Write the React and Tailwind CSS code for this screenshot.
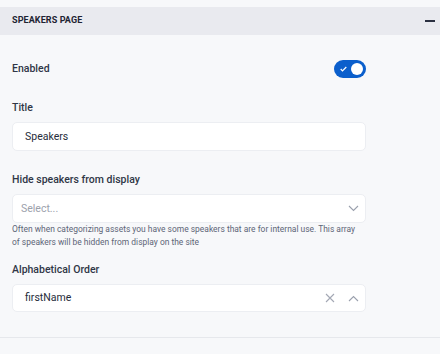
import React from "react";

const Label = ({ children, className = "" }) => (
  <div className={`text-[10.5px] leading-[14px] font-medium text-[#2f3646] ${className}`}>
    {children}
  </div>
);

const ChevronDown = () => (
  <svg width="11" height="7" viewBox="0 0 11 7" fill="none">
    <path d="M1 1l4.5 4.5L10 1" stroke="#9aa0ad" strokeWidth="1.1" />
  </svg>
);

const ChevronUp = () => (
  <svg width="11" height="7" viewBox="0 0 11 7" fill="none">
    <path d="M1 6l4.5-4.5L10 6" stroke="#9aa0ad" strokeWidth="1.1" />
  </svg>
);

const Cross = () => (
  <svg width="10" height="10" viewBox="0 0 10 10" fill="none">
    <path d="M1 1l8 8M9 1l-8 8" stroke="#a3a8b4" strokeWidth="1.1" />
  </svg>
);

export default function App() {
  return (
    <div
      className="h-[354px] w-[440px] bg-[#f7f8fa] pt-[7px]"
      style={{ fontFamily: "Roboto, 'Liberation Sans', sans-serif" }}
    >
      {/* Header */}
      <div className="h-[28px] bg-[#e9eaef] pl-3 pr-[5px] flex items-center justify-between">
        <span className="text-[9px] font-bold uppercase tracking-[0.1px] text-[#1e2433]">
          Speakers page
        </span>
        <div className="w-[10px] h-[2px] bg-[#2a3040]" />
      </div>

      {/* Body */}
      <div className="border-b border-[#e6e8ec] h-[303px] px-3">
        <div className="w-[354px]">
          {/* Enabled */}
          <div className="pt-[25px] h-[43px] flex items-center justify-between">
            <Label>Enabled</Label>
            <div className="w-[32px] h-[18px] rounded-full bg-[#0b5fcc] flex items-center justify-between pl-[6px] pr-[3px]">
              <svg width="7" height="6" viewBox="0 0 7 6" fill="none">
                <path d="M0.7 3l1.8 1.8L6.3 1" stroke="white" strokeWidth="1.2" />
              </svg>
              <div className="w-[12px] h-[12px] rounded-full bg-white" />
            </div>
          </div>

          {/* Title */}
          <Label className="mt-[23px]">Title</Label>
          <div className="mt-[7px] h-[29px] bg-white border border-[#eceef2] rounded-[5px] flex items-center px-3">
            <span className="text-[10.5px] text-[#262c3a]">Speakers</span>
          </div>

          {/* Hide speakers */}
          <Label className="mt-[22px]">Hide speakers from display</Label>
          <div className="mt-[7px] h-[29px] bg-white border border-[#eceef2] rounded-[5px] flex items-center justify-between pl-2 pr-[6px]">
            <span className="text-[10.5px] text-[#9ca1ac]">Select...</span>
            <ChevronDown />
          </div>
          <p className="text-[8.45px] leading-[13px] text-[#5d6577] pr-[6px]">
            Often when categorizing assets you have some speakers that are for internal use. This array of speakers will be hidden from display on the site
          </p>

          {/* Alphabetical */}
          <Label className="mt-[14px]">Alphabetical Order</Label>
          <div className="mt-[7px] h-[28px] bg-white border border-[#eceef2] rounded-[5px] flex items-center pl-3 pr-[6px]">
            <span className="text-[10.5px] text-[#262c3a] flex-1">firstName</span>
            <div className="mr-[13px] flex items-center">
              <Cross />
            </div>
            <ChevronUp />
          </div>
        </div>
      </div>
    </div>
  );
}
